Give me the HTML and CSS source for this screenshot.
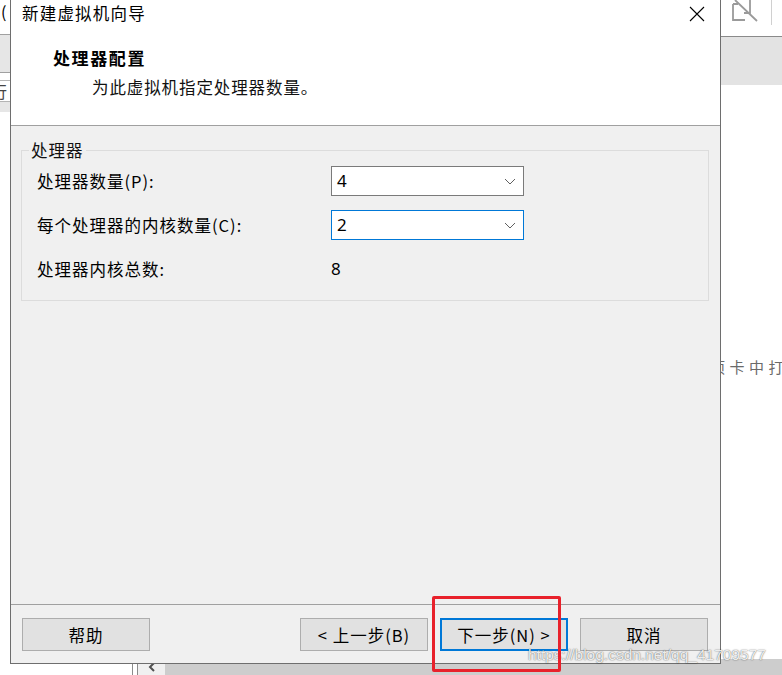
FILE: index.html
```html
<!DOCTYPE html>
<html lang="zh-CN">
<head>
<meta charset="utf-8">
<title>新建虚拟机向导</title>
<link rel="stylesheet" href="styles.css">
</head>
<body>
<div class="app">
  <div class="left-pane">
    <div class="lp-top">(</div>
    <div class="lp-band"></div>
    <div class="lp-gap"></div>
    <div class="lp-field">行</div>
    <div class="lp-band2"></div>
  </div>
  <div class="center-pane"></div>
  <div class="right-pane">
    <div class="rp-top">
      <svg class="rp-icon" width="28" height="22" viewBox="0 0 28 22">
        <path d="M3 4 V20 H15 M3 4 H8 M20 0 V13 H14 M5 0 L27 21" fill="none" stroke="#9a9a9a" stroke-width="1.8"/>
      </svg>
      <div class="rp-divider"></div>
    </div>
    <div class="rp-band"></div>
    <div class="rp-text">项卡中打开</div>
  </div>
  <div class="hscroll">
    <div class="hs-blank"></div>
    <div class="hs-split"></div>
    <div class="hs-arrow">
      <svg width="8" height="10" viewBox="0 0 8 10"><polyline points="6,1 2,5 6,9" fill="none" stroke="#505050" stroke-width="2"/></svg>
    </div>
    <div class="hs-track"></div>
  </div>
</div>

<div class="dialog">
  <div class="top">
    <div class="titlebar">
      <div class="title">新建虚拟机向导</div>
      <div class="close">
        <svg width="16" height="16" viewBox="0 0 16 16"><path d="M1 1 L15 15 M15 1 L1 15" stroke="#000" stroke-width="1.1"/></svg>
      </div>
    </div>
    <div class="header">
      <div class="h-title">处理器配置</div>
      <div class="h-sub">为此虚拟机指定处理器数量。</div>
    </div>
  </div>
  <div class="body">
    <fieldset class="group">
      <legend>处理器</legend>
      <div class="rows">
        <div class="row">
          <div class="label">处理器数量(P):</div>
          <div class="combo">
            <span class="val">4</span>
            <svg width="12" height="7" viewBox="0 0 12 7"><polyline points="1,1 6,6 11,1" fill="none" stroke="#606060" stroke-width="1"/></svg>
          </div>
        </div>
        <div class="row">
          <div class="label">每个处理器的内核数量(C):</div>
          <div class="combo focus">
            <span class="val">2</span>
            <svg width="12" height="7" viewBox="0 0 12 7"><polyline points="1,1 6,6 11,1" fill="none" stroke="#606060" stroke-width="1"/></svg>
          </div>
        </div>
        <div class="row">
          <div class="label">处理器内核总数:</div>
          <div class="val">8</div>
        </div>
      </div>
    </fieldset>
  </div>
  <div class="footer">
    <button class="btn">帮助</button>
    <div class="btn-group">
      <button class="btn">&lt; 上一步(B)</button>
      <button class="btn default">下一步(N) &gt;</button>
      <button class="btn">取消</button>
    </div>
  </div>
</div>

<div class="watermark">https://blog.csdn.net/qq_41709577</div>
<div class="highlight"></div>
</body>
</html>
```

FILE: styles.css
```css
html, body {
  margin: 0;
  padding: 0;
}
body {
  width: 782px;
  height: 675px;
  overflow: hidden;
  background: #fff;
  position: relative;
  font-family: "Noto Sans CJK SC", "Microsoft YaHei", sans-serif;
  color: #000;
}

/* background application */
.app {
  display: grid;
  grid-template-columns: 10px 711px 61px;
  grid-template-rows: 659px 16px;
  height: 675px;
}
.left-pane {
  overflow: hidden;
}
.lp-top {
  height: 34px;
  border-bottom: 1px solid #a0a0a0;
  font-size: 16px;
  line-height: 22px;
  padding-left: 1px;
}
.lp-band {
  height: 37px;
  background: #e6e6e6;
  border-bottom: 1px solid #a0a0a0;
}
.lp-gap {
  height: 7px;
}
.lp-field {
  height: 20px;
  border-top: 1px solid #b4b4b4;
  border-bottom: 1px solid #b4b4b4;
  font-size: 16px;
  line-height: 20px;
  text-indent: -9px;
  white-space: nowrap;
  overflow: hidden;
  color: #444;
}
.lp-band2 {
  height: 10px;
  background: #e6e6e6;
}
.right-pane {
  min-width: 0;
}
.rp-top {
  height: 36px;
  border-bottom: 1px solid #8a8a8a;
  display: flex;
  align-items: flex-start;
}
.rp-icon {
  margin-left: 9px;
  display: block;
}
.rp-divider {
  width: 1px;
  height: 25px;
  background: #d0d0d0;
  margin-left: 13px;
}
.rp-band {
  height: 48px;
  background: #e3e3e3;
}
.rp-text {
  margin-top: 272px;
  margin-left: -11px;
  font-size: 15px;
  line-height: 20px;
  letter-spacing: 4.5px;
  white-space: nowrap;
  color: #6a6a6a;
}
.hscroll {
  grid-column: 1 / -1;
  display: flex;
}
.hs-blank {
  width: 132px;
  background: #fff;
}
.hs-split {
  width: 6px;
  box-sizing: border-box;
  border-left: 1px solid #8c8c8c;
  border-right: 1px solid #8c8c8c;
  background: #fff;
}
.hs-arrow {
  width: 27px;
  background: #f0f0f0;
  display: flex;
  align-items: center;
  justify-content: center;
}
.hs-track {
  flex: 1;
  background: #cdcdcd;
}

/* dialog window */
.dialog {
  position: absolute;
  left: 10px;
  top: 0;
  width: 711px;
  height: 664px;
  box-sizing: border-box;
  border: 1px solid #6e6e6e;
  border-top: none;
  background: #f0f0f0;
  display: flex;
  flex-direction: column;
  z-index: 2;
}
.top {
  background: #fff;
  border-bottom: 1px solid #a0a0a0;
}
.titlebar {
  height: 30px;
  display: flex;
  justify-content: space-between;
  align-items: flex-start;
  padding-left: 11px;
}
.title {
  font-size: 16.5px;
  letter-spacing: 1.2px;
  line-height: 27px;
}
.close {
  width: 46px;
  height: 28px;
  display: flex;
  align-items: center;
  justify-content: center;
}
.header {
  height: 95px;
  padding-left: 42px;
  box-sizing: border-box;
  padding-top: 16px;
}
.h-title {
  font-weight: bold;
  font-size: 17px;
  letter-spacing: 1.6px;
  line-height: 24px;
}
.h-sub {
  margin-top: 5px;
  padding-left: 39px;
  font-size: 16.5px;
  letter-spacing: 0.9px;
  line-height: 24px;
  color: #111;
}
.body {
  flex: 1;
  padding: 14px 11px 0 10px;
}
.group {
  margin: 0;
  border: 1px solid #dcdcdc;
  padding: 0 0 16px 7px;
  font-size: 16.5px;
  letter-spacing: 1px;
}
.group legend {
  padding: 0 2px;
  line-height: 20px;
  color: #111;
}
.rows {
  margin-top: 6px;
  padding-left: 8px;
  display: flex;
  flex-direction: column;
  gap: 14px;
}
.row {
  display: flex;
  align-items: center;
  height: 30px;
}
.label {
  width: 294px;
  flex: none;
  line-height: 24px;
}
.val {
  font-family: "Noto Sans", "Open Sans", sans-serif;
  font-size: 17px;
  letter-spacing: 0;
  line-height: 24px;
}
.combo {
  width: 193px;
  height: 30px;
  box-sizing: border-box;
  border: 1px solid #7a7a7a;
  background: #fff;
  display: flex;
  align-items: center;
  justify-content: space-between;
  padding: 0 7px 0 5px;
}
.combo svg {
  display: block;
}
.combo.focus {
  border-color: #0078d7;
}
.footer {
  height: 59px;
  box-sizing: border-box;
  border-top: 1px solid #a0a0a0;
  padding: 13px 12px 0 11px;
  display: flex;
  justify-content: space-between;
  align-items: flex-start;
}
.btn-group {
  display: flex;
  gap: 12px;
}
.btn {
  width: 128px;
  height: 33px;
  box-sizing: border-box;
  background: #e1e1e1;
  border: 1px solid #adadad;
  border-radius: 0;
  margin: 0;
  padding: 0;
  font-family: "Noto Sans CJK SC", "Microsoft YaHei", sans-serif;
  font-size: 16.5px;
  letter-spacing: 1px;
  color: #000;
  line-height: 24px;
}
.btn.default {
  border: 2px solid #0078d7;
}

/* overlays */
.watermark {
  position: absolute;
  left: 528px;
  top: 645px;
  font-family: "Liberation Sans", Arial, sans-serif;
  font-size: 15.5px;
  line-height: 20px;
  color: rgba(255, 255, 255, 0.9);
  text-shadow: 0 0 1px rgba(0, 0, 0, 0.55), 0 0 2px rgba(0, 0, 0, 0.3);
  white-space: nowrap;
  z-index: 3;
}
.highlight {
  position: absolute;
  left: 432px;
  top: 596px;
  width: 129px;
  height: 76px;
  box-sizing: border-box;
  border: 3px solid #e8212b;
  border-radius: 2px;
  z-index: 4;
}
```
